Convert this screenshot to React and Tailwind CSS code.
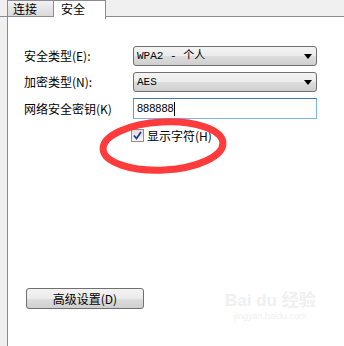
const CJK = { fontFamily: '"Noto Sans CJK SC", "Noto Sans", sans-serif' }
const MONO = { fontFamily: '"Liberation Mono", "Noto Sans CJK SC", monospace' }

function Select({ value }) {
  return (
    <div className="flex h-[20px] w-[184px] items-center justify-between rounded-[3px] border border-[#707070] bg-[linear-gradient(#f4f4f4_0%,#ebebeb_50%,#dddddd_51%,#cfcfcf_100%)] pl-[3px] pr-[4px]">
      <span className="text-[11px] leading-none text-black" style={MONO}>{value}</span>
      <svg width="8" height="5" viewBox="0 0 8 5">
        <path d="M0 0h8L4 5z" fill="#000" />
      </svg>
    </div>
  )
}

function Row({ label, children }) {
  return (
    <div className="flex items-center">
      <span className="w-[109px] text-[12px] leading-none text-black" style={CJK}>{label}</span>
      {children}
    </div>
  )
}

export default function App() {
  return (
    <div className="relative flex h-[346px] w-[344px] flex-col overflow-hidden bg-[#f0f0f0]">
      {/* tabs */}
      <div className="flex h-[17px] items-start border-b border-[#898c95] pl-[7px]">
        <div className="flex h-[16px] w-[47px] items-center border-l border-r border-t border-[#898c95] bg-[linear-gradient(#f2f2f2,#d9d9d9)] pl-[5px]">
          <span className="text-[12px] leading-none text-black" style={CJK}>连接</span>
        </div>
        <div className="relative z-10 -mb-[3px] flex h-[19px] w-[52px] items-start border-r border-t border-[#898c95] bg-white pl-[7px] pt-[1px]">
          <span className="text-[12px] leading-[14px] text-black" style={CJK}>安全</span>
        </div>
      </div>

      {/* panel */}
      <div className="ml-[7px] flex flex-1 flex-col border-l border-[#898c95] bg-white pl-[16px] pt-[29px]">
        <div className="flex flex-col gap-[6px]">
          <Row label="安全类型(E):">
            <Select value="WPA2 - 个人" />
          </Row>
          <Row label="加密类型(N):">
            <Select value="AES" />
          </Row>
          <Row label="网络安全密钥(K)">
            <div className="flex h-[21px] w-[184px] items-center border border-[#7eb4ea] border-t-[#3d7bad] border-l-[#569de5] bg-white pl-[3px]">
              <span className="text-[11px] leading-none text-black" style={{ fontFamily: '"Liberation Sans", sans-serif' }}>888888</span>
              <span className="h-[14px] w-px bg-black" />
            </div>
          </Row>
        </div>

        <div className="ml-[107px] mt-[10px] flex items-center gap-[3px]">
          <div className="flex h-[13px] w-[13px] items-center justify-center border border-[#8e8f8f] bg-[linear-gradient(#dedede,#f7f7f7)]">
            <svg width="9" height="9" viewBox="0 0 9 9">
              <path d="M1 4.5l2.5 3L8 1" stroke="#2a3a8c" strokeWidth="1.8" fill="none" />
            </svg>
          </div>
          <span className="text-[12px] leading-none text-black" style={CJK}>显示字符(H)</span>
        </div>

        <button className="ml-[2px] mt-[146px] flex h-[21px] w-[118px] items-center justify-center rounded-[3px] border border-[#707070] bg-[linear-gradient(#f2f2f2_0%,#ebebeb_50%,#dddddd_51%,#cfcfcf_100%)]">
          <span className="text-[12px] leading-none text-black" style={CJK}>高级设置(D)</span>
        </button>
      </div>

      {/* red annotation ellipse */}
      <svg className="pointer-events-none absolute left-[98px] top-[116px]" width="132" height="60" viewBox="0 0 132 60">
        <ellipse cx="65" cy="30" rx="60" ry="24" transform="rotate(-3 65 30)" fill="none" stroke="#ff3b3b" strokeWidth="7" />
      </svg>

      {/* watermark */}
      <div className="pointer-events-none absolute left-[225px] top-[292px] flex flex-col items-center text-[#f0f0f0]">
        <span className="text-[17px] font-bold leading-none" style={{ fontFamily: '"Liberation Sans", "Noto Sans CJK SC", sans-serif' }}>Bai du 经验</span>
        <span className="mt-[3px] text-[9px] leading-none" style={{ fontFamily: '"Liberation Sans", sans-serif' }}>jingyan.baidu.com</span>
      </div>
    </div>
  )
}
